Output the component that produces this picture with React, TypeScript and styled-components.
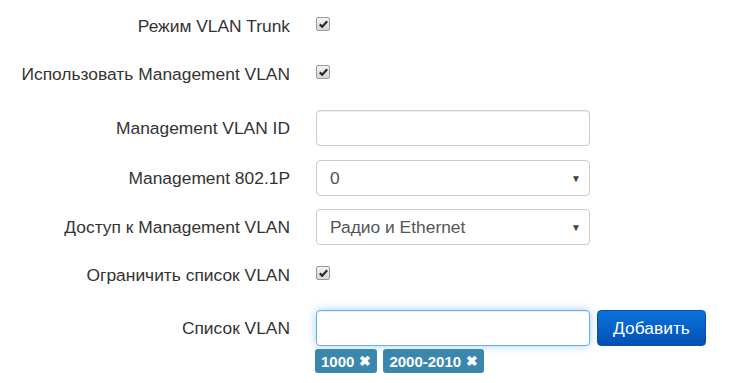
import styled, { createGlobalStyle } from 'styled-components'

const Global = createGlobalStyle`
  body {
    margin: 0;
    background: #fff;
    font-family: 'Liberation Sans', Arial, sans-serif;
    font-size: 17.4px;
    color: #333;
  }
`

export default function App () {
  return (
    <>
      <Global />
      <Form>
        <Row $top={8}>
          <Label>Режим VLAN Trunk</Label>
          <Check />
        </Row>
        <Row $top={12}>
          <Label>Использовать Management VLAN</Label>
          <Check />
        </Row>
        <Row $top={18}>
          <Label>Management VLAN ID</Label>
          <Input />
        </Row>
        <Row $top={14}>
          <Label>Management 802.1P</Label>
          <Select>
            <span>0</span>
            <Caret>▼</Caret>
          </Select>
        </Row>
        <Row $top={13}>
          <Label>Доступ к Management VLAN</Label>
          <Select>
            <span>Радио и Ethernet</span>
            <Caret>▼</Caret>
          </Select>
        </Row>
        <Row $top={12}>
          <Label>Ограничить список VLAN</Label>
          <Check />
        </Row>
        <Row $top={17}>
          <Label>Список VLAN</Label>
          <Input $focus />
          <AddButton>Добавить</AddButton>
        </Row>
        <Tags>
          <Tag>1000 <X>✖</X></Tag>
          <Tag>2000-2010 <X>✖</X></Tag>
        </Tags>
      </Form>
    </>
  )
}

function Check () {
  return (
    <CheckBox>
      <svg width="9" height="8" viewBox="0 0 9 8">
        <path d="M0.8 4.4 L3.2 6.8 L8.2 1.2" fill="none" stroke="#2b2b2b" strokeWidth="2.2" />
      </svg>
    </CheckBox>
  )
}

const Form = styled.div`
  display: flex;
  flex-direction: column;
`

const Row = styled.div<{ $top: number }>`
  display: flex;
  align-items: center;
  height: 36px;
  margin-top: ${p => p.$top}px;
`

const Label = styled.div`
  width: 290px;
  text-align: right;
  margin-right: 26px;
  flex-shrink: 0;
  white-space: nowrap;
`

const CheckBox = styled.span`
  width: 12px;
  height: 12px;
  border: 1px solid #9a9a9a;
  border-radius: 2px;
  background: linear-gradient(#f2f2f2, #d6d6d6);
  display: flex;
  align-items: center;
  justify-content: center;
  margin-top: -4px;
`

const Input = styled.div<{ $focus?: boolean }>`
  box-sizing: border-box;
  width: 274px;
  height: 36px;
  border: 1px solid ${p => p.$focus ? '#66afe9' : '#ccc'};
  border-radius: 4px;
  background: #fff;
  box-shadow: inset 0 1px 1px rgba(0,0,0,.075)${p => p.$focus ? ', 0 0 8px rgba(102,175,233,.6)' : ''};
`

const Select = styled.div`
  box-sizing: border-box;
  width: 274px;
  height: 36px;
  border: 1px solid #ccc;
  border-radius: 4px;
  display: flex;
  align-items: center;
  justify-content: space-between;
  padding: 0 8px 0 13px;
  color: #555;
`

const Caret = styled.span`
  font-size: 10px;
  color: #444;
`

const AddButton = styled.div`
  box-sizing: border-box;
  width: 109px;
  height: 36px;
  margin-left: 7px;
  border-radius: 4px;
  border: 1px solid #0a4fa8;
  background: linear-gradient(#0a74dc, #0150b4);
  color: #fff;
  display: flex;
  align-items: center;
  justify-content: center;
`

const Tags = styled.div`
  display: flex;
  gap: 6px;
  margin: 3px 0 0 315px;
`

const Tag = styled.span`
  background: #3a87ad;
  color: #fff;
  font-weight: bold;
  font-size: 15px;
  height: 24px;
  padding: 0 6px;
  border-radius: 3px;
  display: flex;
  align-items: center;
  gap: 5px;
`

const X = styled.span`
  font-size: 14px;
`
